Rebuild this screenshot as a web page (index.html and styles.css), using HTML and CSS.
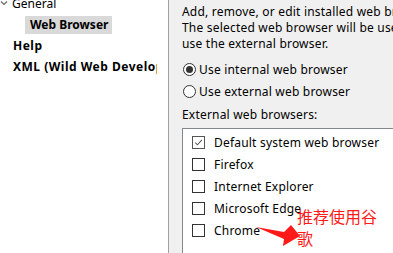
FILE: index.html
```html
<!DOCTYPE html>
<html lang="en">
<head>
    <meta charset="UTF-8">
    <title>Preferences - Web Browser</title>
    <link rel="stylesheet" href="styles.css">
</head>
<body>

<div class="prefs">
    <div class="tree">
        <div class="tree-row">
            <svg class="chevron" viewBox="0 0 8 6"><path d="M1 1.5 4 4.5 7 1.5"/></svg>
            <span>General</span>
        </div>
        <div class="tree-row child"><span class="selected">Web Browser</span></div>
        <div class="tree-row bold">Help</div>
        <div class="tree-row bold">XML (Wild Web Developer)</div>
    </div>

    <div class="page">
        <p class="intro">Add, remove, or edit installed web browsers.<br>
            The selected web browser will be used by default when web pages are opened, although some applications may always<br>
            use the external browser.</p>

        <label class="radio-row"><span class="radio checked"></span>Use internal web browser</label>
        <label class="radio-row"><span class="radio"></span>Use external web browser</label>

        <div class="section-label">External web browsers:</div>
        <div class="browser-list">
            <div class="check-row">
                <span class="check checked">
                    <svg viewBox="0 0 13 13"><path d="M2.5 6.5 5.2 9.2 10.5 3.5"/></svg>
                </span>
                Default system web browser
            </div>
            <div class="check-row"><span class="check"></span>Firefox</div>
            <div class="check-row"><span class="check"></span>Internet Explorer</div>
            <div class="check-row"><span class="check"></span>Microsoft Edge</div>
            <div class="check-row"><span class="check"></span>Chrome</div>
        </div>
    </div>
</div>

<!-- annotation drawn over the screenshot -->
<svg class="note-arrow" viewBox="0 0 50 24">
    <polygon points="0,3 28,8 35,1 44,12 27,22 28,15"/>
</svg>
<div class="note">推荐使用谷歌</div>

</body>
</html>
```

FILE: styles.css
```css
body {
    margin: 0;
    width: 393px;
    height: 253px;
    overflow: hidden;
    font-family: "Noto Sans", Arial, sans-serif;
    font-size: 12px;
    color: #000;
    position: relative;
}
.prefs {
    display: flex;
    height: 253px;
}
.tree {
    width: 168px;
    flex-shrink: 0;
    background: white;
    border-right: 1px solid #a0a0a0;
    margin-top: -7px;
    overflow: hidden;
}
.tree-row {
    height: 21px;
    display: flex;
    align-items: center;
    white-space: nowrap;
    padding-left: 12px;
    position: relative;
    width: 145px;
    overflow: hidden;
}
.tree-row.bold {
    font-weight: bold;
    letter-spacing: 0.5px;
    padding-left: 13px;
    width: 144px;
}
.tree-row.child {
    padding-left: 25px;
}
.chevron {
    position: absolute;
    left: 0;
    top: 7px;
    width: 8px;
    height: 6px;
    fill: none;
    stroke: #666;
    stroke-width: 1.2;
}
.selected {
    font-weight: bold;
    background: #d9d9d9;
    padding: 0 4px 0 5px;
    line-height: 18px;
}
.page {
    flex: 1;
    min-width: 0;
    background: #f0f0f0;
    padding: 4px 0 0 13px;
    overflow: hidden;
    letter-spacing: 0.2px;
}
.intro {
    margin: 0;
    line-height: 16px;
    white-space: nowrap;
}
.radio-row {
    display: flex;
    align-items: center;
    height: 22px;
    white-space: nowrap;
}
.intro + .radio-row {
    margin-top: 6px;
}
.radio {
    width: 11px;
    height: 11px;
    border: 1px solid #333;
    border-radius: 50%;
    background: white;
    margin: 0 3px 0 1px;
    display: flex;
    align-items: center;
    justify-content: center;
}
.radio.checked::after {
    content: "";
    width: 7px;
    height: 7px;
    border-radius: 50%;
    background: #333;
}
.section-label {
    height: 18px;
    line-height: 18px;
    margin-top: 4px;
}
.browser-list {
    margin-top: 4px;
    background: white;
    border: 1px solid #828790;
    border-right: none;
    padding: 2px 0 20px 9px;
}
.check-row {
    height: 22px;
    display: flex;
    align-items: center;
    gap: 9px;
    white-space: nowrap;
}
.check {
    width: 11px;
    height: 11px;
    border: 1px solid #333;
    background: white;
    display: flex;
}
.check.checked {
    border-color: #555;
}
.check svg {
    width: 11px;
    height: 11px;
    fill: none;
    stroke: #555;
    stroke-width: 1.2;
}
.note-arrow {
    position: absolute;
    left: 256px;
    top: 224px;
    width: 50px;
    height: 24px;
    fill: #ff1a1a;
}
.note {
    position: absolute;
    left: 297px;
    top: 205px;
    width: 84px;
    font-family: "Noto Sans CJK SC", sans-serif;
    font-size: 16px;
    line-height: 22px;
    color: #ff1a1a;
}
```
